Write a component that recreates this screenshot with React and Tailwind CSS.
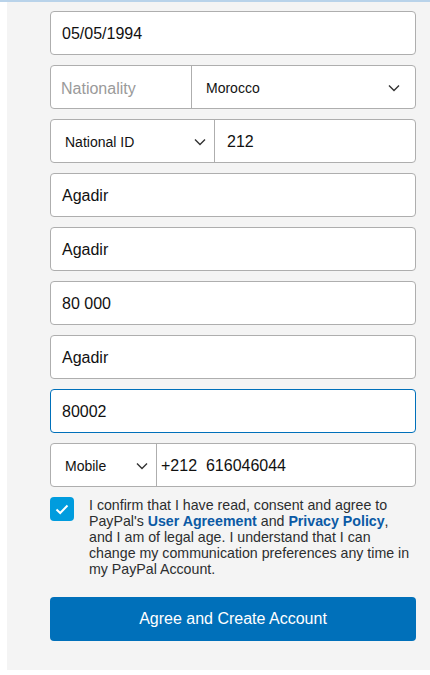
import React from "react";

const Chevron = ({ className = "" }) => (
  <svg width="12" height="8" viewBox="0 0 12 8" className={className} fill="none">
    <path d="M1 1.5 L6 6.5 L11 1.5" stroke="#333" strokeWidth="1.4" />
  </svg>
);

const Field = ({ children, focused }) => (
  <div
    className={`h-[44px] w-full rounded-[4px] border bg-white flex items-center px-[11px] pt-[2px] text-[16px] text-[#111] ${
      focused ? "border-[#0070ba]" : "border-[#aeaeae]"
    }`}
  >
    {children}
  </div>
);

export default function App() {
  return (
    <div className="min-h-[675px] bg-white" style={{ fontFamily: '"Liberation Sans", Arial, sans-serif' }}>
      <div className="h-[2px] bg-[#b9d3ea]" />
      <div className="ml-[7px] bg-[#f4f4f4] pt-[9px] pb-[29px]">
        <div className="ml-[43px] w-[366px] flex flex-col gap-[10px]">
          <Field>05/05/1994</Field>
          <div className="h-[44px] flex rounded-[4px] border border-[#aeaeae] bg-white overflow-hidden">
            <div className="w-[141px] border-r border-[#aeaeae] flex items-center px-[10px] pt-[3px] text-[16px] text-[#9a9a9a]">
              Nationality
            </div>
            <div className="flex-1 flex items-center justify-between pl-[14px] pr-[15px] pt-[2px] text-[14px] text-[#111]">
              <span>Morocco</span>
              <Chevron />
            </div>
          </div>
          <div className="h-[44px] flex rounded-[4px] border border-[#aeaeae] bg-white overflow-hidden">
            <div className="w-[164px] border-r border-[#aeaeae] flex items-center justify-between pl-[14px] pr-[8px] pt-[2px] text-[14px] text-[#111]">
              <span>National ID</span>
              <Chevron />
            </div>
            <div className="flex-1 flex items-center px-[12px] pt-[2px] text-[16px] text-[#111]">212</div>
          </div>
          <Field>Agadir</Field>
          <Field>Agadir</Field>
          <Field>80 000</Field>
          <Field>Agadir</Field>
          <Field focused>80002</Field>
          <div className="h-[44px] flex rounded-[4px] border border-[#aeaeae] bg-white overflow-hidden">
            <div className="w-[106px] border-r border-[#aeaeae] flex items-center justify-between pl-[14px] pr-[8px] pt-[2px] text-[14px] text-[#111]">
              <span>Mobile</span>
              <Chevron />
            </div>
            <div className="flex-1 flex items-center px-[4px] pt-[2px] text-[16px] text-[#111] whitespace-pre">+212  616046044</div>
          </div>
          <div className="flex">
            <div className="w-[24px] h-[24px] rounded-[4px] bg-[#009cde] flex items-center justify-center shrink-0">
              <svg width="14" height="11" viewBox="0 0 14 11" fill="none">
                <path d="M1.5 5.5 L5.2 9 L12.5 1.5" stroke="white" strokeWidth="2" />
              </svg>
            </div>
            <p className="ml-[15px] text-[14.2px] leading-[16px] text-[#2c2e2f] pr-[4px]">
              I confirm that I have read, consent and agree to PayPal's{" "}
              <span className="font-bold text-[#0b5aa5]">User Agreement</span> and{" "}
              <span className="font-bold text-[#0b5aa5]">Privacy Policy</span>, and I am of legal age. I understand that I can
              change my communication preferences any time in my PayPal Account.
            </p>
          </div>
          <button className="mt-[10px] h-[44px] w-full rounded-[4px] bg-[#0070ba] text-white text-[16px]">
            Agree and Create Account
          </button>
        </div>
      </div>
    </div>
  );
}
